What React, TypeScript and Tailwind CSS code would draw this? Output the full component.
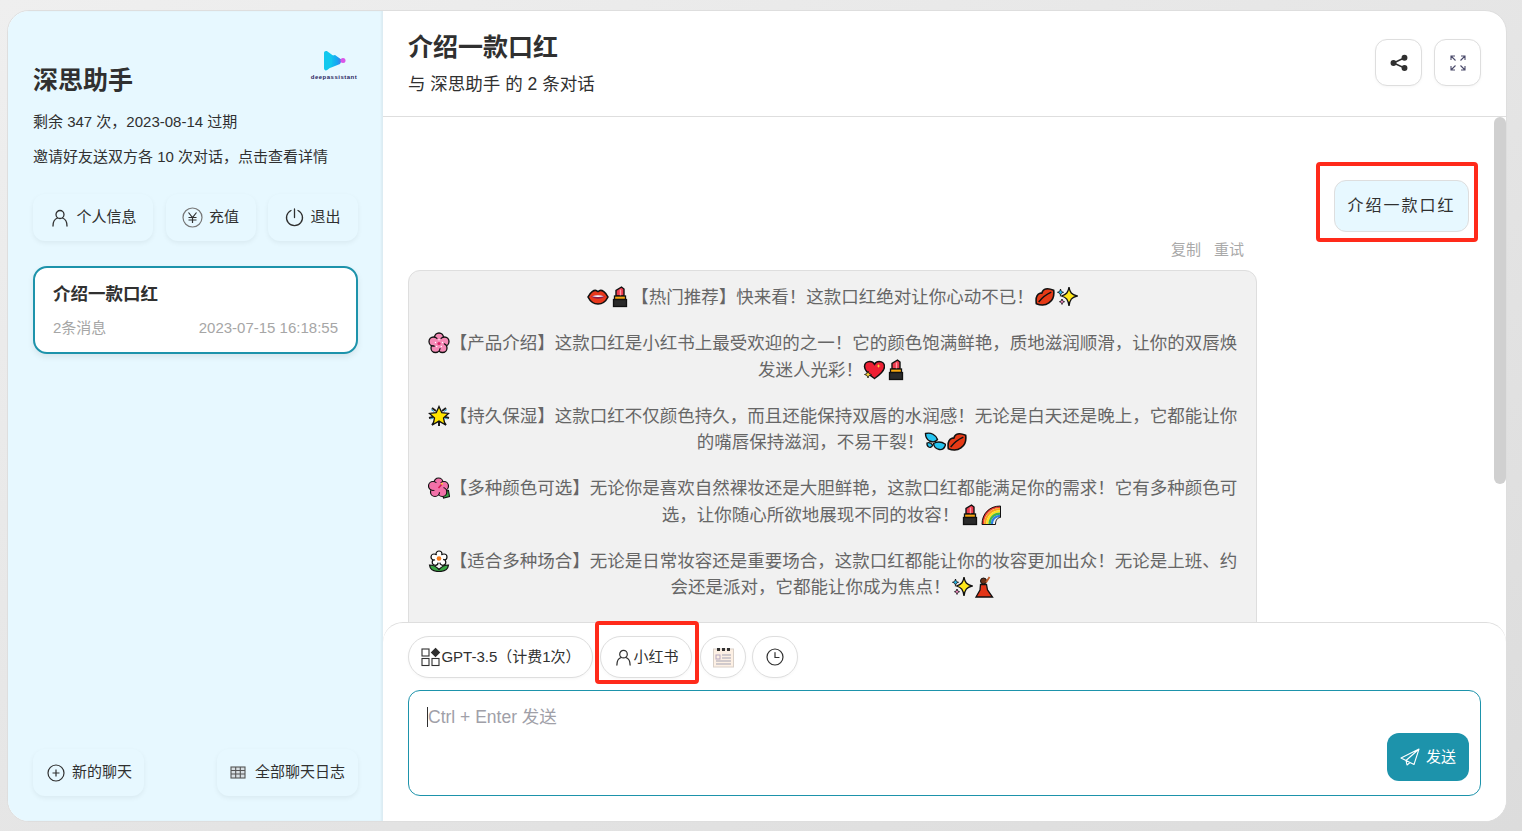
import React from "react";

const O = "#111";

function E({ children, w = 22 }: { children: React.ReactNode; w?: number }) {
  return (
    <svg viewBox="0 0 22 22" width={w} height={22} className="inline-block align-[-5px]">
      {children}
    </svg>
  );
}

const Lips = () => (
  <E>
    <path d="M1 11C3.500 6 7 4 9 4.500c1 .3 1.500 1 2 1s1-.7 2-1C15 4 18.500 6 21 11c-2.500 5-6 7-10 7S3.500 16 1 11Z" fill="#e8381c" stroke={O} strokeWidth="1.600" />
    <path d="M4 10.500Q11 8 18 10.500 11 15 4 10.500Z" fill="#8e1a4a" />
    <path d="M5 10.300Q11 8.300 17 10.300 11 11.800 5 10.300Z" fill="#fff" />
  </E>
);
const Lipstick = () => (
  <E>
    <path d="M7 10V4.500L12.500 1 15 3V10Z" fill="#ec3b4e" stroke={O} strokeWidth="1.400" />
    <path d="M11.500 3.500V10" stroke="#ff9aa5" strokeWidth="1.400" />
    <rect x="5.500" y="10" width="11" height="3.500" fill="#f7a812" stroke={O} strokeWidth="1.300" />
    <rect x="4.500" y="13.500" width="13" height="7" fill="#2a2a2a" stroke={O} strokeWidth="1.300" />
  </E>
);
const Kiss = () => (
  <E>
    <g transform="rotate(-38 11 11)">
      <path d="M0 11C3.500 5 7 4 9.500 5c.8.400 1 1 1.500 1s.7-.6 1.500-1C15 4 18.500 5 22 11c-3.500 6-7 7-10.500 7h-1C7 18 3.500 17 0 11Z" fill="#e63a16" stroke={O} strokeWidth="1.600" />
      <path d="M3 11Q11 9 19 11" fill="none" stroke={O} strokeWidth="1.500" />
    </g>
  </E>
);
const Sparkles = () => (
  <E>
    <path d="M13 1c.9 5.500 2.500 7.500 8 9-5.500 1.500-7.100 3.500-8 10-.9-6.500-2.500-8.500-7.500-10 5-1.500 6.600-3.500 7.500-9Z" fill="#ffe81a" stroke={O} strokeWidth="1.300" />
    <path d="M4.500 3c.4 2.100 1.100 2.800 3 3.300-1.900.5-2.600 1.200-3 3.300-.4-2.100-1.100-2.800-3-3.300 1.900-.5 2.600-1.200 3-3.300Z" fill="#27b7e8" stroke={O} strokeWidth=".9" />
    <path d="M6 13c.4 1.700.9 2.200 2.500 2.700-1.600.5-2.100 1-2.500 2.700-.4-1.700-.9-2.200-2.500-2.700 1.600-.5 2.100-1 2.500-2.700Z" fill="#ef86c0" stroke={O} strokeWidth=".9" />
  </E>
);
const Blossom = () => (
  <E>
    <g fill="#f58ab6" stroke={O} strokeWidth="1.300">
      <circle cx="11" cy="5.500" r="4.500" />
      <circle cx="16.500" cy="9.500" r="4.500" />
      <circle cx="14.500" cy="16" r="4.500" />
      <circle cx="7.500" cy="16" r="4.500" />
      <circle cx="5.500" cy="9.500" r="4.500" />
    </g>
    <circle cx="11" cy="11.500" r="5" fill="#f58ab6" />
    <circle cx="11" cy="11.500" r="1.600" fill="#e2246a" />
    <g fill="#fff">
      <circle cx="11" cy="7.800" r=".7" />
      <circle cx="14.500" cy="10.500" r=".7" />
      <circle cx="7.500" cy="10.500" r=".7" />
      <circle cx="13.300" cy="14.500" r=".7" />
      <circle cx="8.700" cy="14.500" r=".7" />
    </g>
  </E>
);
const SparkHeart = () => (
  <E>
    <path d="M11.500 19.500C5 15 1.500 11.500 1.500 7.500 1.500 4.500 4 2.500 6.800 2.500c2 0 3.700 1 4.700 2.800 1-1.800 2.700-2.800 4.700-2.800 2.800 0 5.300 2 5.300 5 0 4-3.500 7.500-10 12Z" fill="#ee1f33" stroke={O} strokeWidth="1.500" />
    <path d="M15.500 5l.6 1.500 1.500.5-1.500.6-.6 1.400-.6-1.400-1.400-.6 1.400-.5Z" fill="#ffd83a" />
    <path d="M5 12l1 2.500 2.500 1-2.500 1-1 2.500-1-2.500-2.500-1 2.500-1Z" fill="#ffd83a" stroke={O} strokeWidth=".8" />
  </E>
);
const GlowStar = () => (
  <E>
    <path d="M4 3l4 3M18 3l-4 3M1 13l4-1M21 13l-4-1M4 20l3-4M18 20l-3-4M11 21v-4" stroke="#1d1d1d" strokeWidth="2" />
    <path d="M3 4.500l3 2M19 4.500l-3 2M2.500 14l3-1M19.500 14l-3-1" stroke="#25a9de" strokeWidth="1" />
    <path d="M11 1.500l2.800 6.200 6.700.7-5 4.500 1.400 6.600-5.900-3.400-5.900 3.400 1.400-6.600-5-4.500 6.700-.7Z" fill="#ffe500" stroke={O} strokeWidth="1.300" />
  </E>
);
const Drops = () => (
  <E>
    <path d="M1.500 2.500C7 1 12 4 13.500 8.500c-1.800 2.500-5 2.800-8 1.500C3 8.500 1.500 5.500 1.500 2.500Z" fill="#25c4f0" stroke={O} strokeWidth="1.400" />
    <path d="M9.500 12.500c3.500-2 8-2 12 .8-.4 4-3.400 5.700-6.200 5.200-2.700-.5-5.300-2.700-5.800-6Z" fill="#25c4f0" stroke={O} strokeWidth="1.400" />
    <path d="M3 12c2.200-.8 4.200 0 5.600 2.200-.9 2-2.500 2.500-3.900 1.800C3.400 15.300 2.800 13.700 3 12Z" fill="#25c4f0" stroke={O} strokeWidth="1.300" />
  </E>
);
const Hibiscus = () => (
  <E>
    <path d="M14 15l6.500-1.500 1 6-6 1.500Z" fill="#3aa544" stroke={O} strokeWidth="1.100" />
    <g fill="#f271a8" stroke={O} strokeWidth="1.200">
      <circle cx="10.500" cy="5.500" r="4.500" />
      <circle cx="16" cy="9" r="4.500" />
      <circle cx="14.300" cy="15" r="4.500" />
      <circle cx="7" cy="15" r="4.500" />
      <circle cx="5" cy="9" r="4.500" />
    </g>
    <circle cx="10.500" cy="10.500" r="5" fill="#f271a8" />
    <path d="M10.500 11 14 7" stroke="#d3164f" strokeWidth="1.500" />
    <circle cx="14" cy="6.800" r="1" fill="#ffd83a" />
  </E>
);
const Rainbow = () => (
  <E>
    <g fill="none" strokeWidth="2.200">
      <path d="M2 20C2 10 9 3 19 3" stroke="#ef3a2d" />
      <path d="M4.200 20c0-8.500 6.300-14.800 14.800-14.800" stroke="#f9a11b" />
      <path d="M6.400 20c0-7.200 5.400-12.600 12.600-12.600" stroke="#fbe21f" />
      <path d="M8.600 20c0-6 4.400-10.400 10.400-10.400" stroke="#41b649" />
      <path d="M10.800 20c0-4.700 3.500-8.200 8.200-8.200" stroke="#2b7fe0" />
    </g>
    <path d="M1 20.500C1 9.500 8.500 2 19.500 2v11.500c-2.800 0-5 2.500-5 7Z" fill="none" stroke={O} strokeWidth="1" />
  </E>
);
const Flower = () => (
  <E>
    <path d="M1.500 15c3.500 0 6.500 1 9.500 4.500 3-3.500 6-4.500 9.500-4.500-.5 4.500-4.500 6.500-9.500 6.500S2 19.500 1.500 15Z" fill="#3aa544" stroke={O} strokeWidth="1.200" />
    <g fill="#fff" stroke={O} strokeWidth="1.200">
      <circle cx="11" cy="4" r="3" />
      <circle cx="16" cy="7" r="3" />
      <circle cx="14.800" cy="12.300" r="3" />
      <circle cx="7.200" cy="12.300" r="3" />
      <circle cx="6" cy="7" r="3" />
    </g>
    <circle cx="11" cy="8.500" r="4.300" fill="#fff" />
    <circle cx="11" cy="8.500" r="2.300" fill="#f47a1c" />
  </E>
);
const Dancer = () => (
  <E>
    <circle cx="10.500" cy="5" r="3" fill="#6b2f16" stroke={O} strokeWidth="1" />
    <path d="M13 6.500l3.500-5.500" stroke="#c0602f" strokeWidth="1.800" />
    <path d="M7.500 8.500h6l1 5.500 5 7H3l4-7Z" fill="#e23517" stroke={O} strokeWidth="1.300" />
  </E>
);

const ic = { fill: "none", stroke: "currentColor", strokeWidth: 1.3, strokeLinecap: "round" as const, strokeLinejoin: "round" as const };

const UserIcon = ({ s = 18 }: { s?: number }) => (
  <svg viewBox="0 0 18 18" width={s} height={s} {...ic}>
    <circle cx="9" cy="5.500" r="4" />
    <path d="M2 17c0-4 2-7.200 4.500-8M16 17c0-4-2-7.200-4.500-8" />
  </svg>
);

function SideBtn({ className, icon, label }: { className: string; icon: React.ReactNode; label: string }) {
  return (
    <div className={`h-[47px] rounded-[12px] bg-[#e7f8ff] shadow-[0_2px_5px_rgba(0,0,0,0.06)] flex items-center justify-center text-[15px] text-[#303030] ${className}`}>
      {icon}
      <span>{label}</span>
    </div>
  );
}

function Pill({ className, children }: { className: string; children: React.ReactNode }) {
  return (
    <div className={`h-[42px] rounded-full border border-[#dedede] bg-white shadow-[0_1px_3px_rgba(0,0,0,0.04)] flex items-center justify-center text-[15px] text-[#303030] ${className}`}>
      {children}
    </div>
  );
}

function HeadBtn({ children }: { children: React.ReactNode }) {
  return (
    <div className="w-[47px] h-[47px] rounded-[12px] border border-[#dedede] bg-white shadow-[0_1px_3px_rgba(0,0,0,0.04)] flex items-center justify-center text-[#303030]">
      {children}
    </div>
  );
}

export default function App() {
  return (
    <div className="relative w-screen h-[831px] overflow-hidden bg-gradient-to-br from-[#efefef] to-[#dcdcdc] pt-[10px] pl-[7px] pr-[15px] pb-[9px] flex text-[#303030] font-['Liberation_Sans','Noto_Sans_CJK_SC',sans-serif]">
      <div className="flex-1 flex rounded-[22px] border border-[#dedede] overflow-hidden bg-white">
        {/* Sidebar */}
        <aside className="w-[375px] shrink-0 bg-[#e7f8ff] pl-[25px] pr-[25px] flex flex-col shadow-[inset_-2px_0_2px_0_rgba(0,0,0,0.05)]">
          <div className="flex justify-between pt-[39px]">
            <div className="pt-[13px] text-[25px] leading-[34px] font-bold">深思助手</div>
            <div className="flex flex-col items-center w-[48px]">
              <svg viewBox="0 0 24 22" width="24" height="22">
                <defs>
                  <linearGradient id="lg" x1="0" x2="1" y1="0" y2="0">
                    <stop offset="0" stopColor="#12c8ee" />
                    <stop offset="0.6" stopColor="#16a6f2" />
                    <stop offset="1" stopColor="#5a6ce8" />
                  </linearGradient>
                </defs>
                <path d="M2 3c0-1.700 1.700-2.600 3.200-1.700L15 8.500c1.300 1 1.300 3 0 4L5.200 20c-1.500 1-3.200.1-3.200-1.700Z" fill="#12c8ee" />
                <path d="M9 6l4-1 7 5-2 4-5 2-5 2c2.500-4 3-8 1-12Z" fill="url(#lg)" />
                <circle cx="21" cy="10.500" r="2.500" fill="#d956e8" />
              </svg>
              <div className="text-[6px] leading-[7px] font-bold text-[#2b2660] tracking-[0.5px] whitespace-nowrap mt-[2px]">deepassistant</div>
            </div>
          </div>
          <div className="mt-[14px] text-[15px] leading-[22px]">剩余 347 次，2023-08-14 过期</div>
          <div className="mt-[13px] text-[15px] leading-[22px]">邀请好友送双方各 10 次对话，点击查看详情</div>
          <div className="mt-[26px] flex justify-between">
            <SideBtn className="w-[120px] gap-[7px] pl-[2px]" icon={<UserIcon />} label="个人信息" />
            <SideBtn
              className="w-[90px] gap-[6px]"
              icon={
                <svg viewBox="0 0 21 21" width="21" height="21" fill="none" stroke="#555" strokeWidth="1.200">
                  <circle cx="10.500" cy="10.500" r="9.500" stroke="#777" />
                  <path d="M6.500 5.500l4 5 4-5M10.500 10.500V16M6.500 10.500h8M6.500 13h8" stroke="#303030" />
                </svg>
              }
              label="充值"
            />
            <SideBtn
              className="w-[90px] gap-[6px]"
              icon={
                <svg viewBox="0 0 19 19" width="19" height="19" fill="none" stroke="#303030" strokeWidth="1.300" strokeLinecap="round">
                  <path d="M6 2.500a8 8 0 1 0 7 0M9.500 1v8.500" />
                </svg>
              }
              label="退出"
            />
          </div>
          <div className="mt-[25px] h-[88px] rounded-[14px] border-2 border-[#1d93ab] bg-white px-[18px] pt-[14px] shadow-[0_3px_6px_rgba(0,0,0,0.08)]">
            <div className="text-[17.500px] leading-[24px] font-bold">介绍一款口红</div>
            <div className="mt-[12px] flex justify-between text-[15px] leading-[20px] text-[#a6a6a6]">
              <span>2条消息</span>
              <span>2023-07-15 16:18:55</span>
            </div>
          </div>
          <div className="mt-auto mb-[25px] flex justify-between">
            <SideBtn
              className="w-[111px] gap-[7px] pl-[2px]"
              icon={
                <svg viewBox="0 0 18 18" width="18" height="18" fill="none" stroke="#303030" strokeWidth="1.200">
                  <circle cx="9" cy="9" r="8" />
                  <path d="M5.500 9h7M9 5.500v7" />
                </svg>
              }
              label="新的聊天"
            />
            <SideBtn
              className="w-[141px] gap-[9px]"
              icon={
                <svg viewBox="0 0 16 13" width="16" height="13" fill="none" stroke="#555" strokeWidth="1.100">
                  <rect x="1" y="1" width="14" height="11" fill="#d8dfe3" />
                  <path d="M1 4.500h14M1 8h14M5.700 1v11M10.300 1v11" />
                </svg>
              }
              label="全部聊天日志"
            />
          </div>
        </aside>

        {/* Main */}
        <main className="flex-1 min-w-0 flex flex-col">
          <header className="h-[106px] shrink-0 border-b border-[#dedede] px-[25px] flex items-center justify-between">
            <div>
              <div className="text-[25px] leading-[32px] font-bold mt-[1px]">介绍一款口红</div>
              <div className="mt-[8px] text-[17.500px] leading-[26px]">与 深思助手 的 2 条对话</div>
            </div>
            <div className="flex gap-[12px] -mt-[2px]">
              <HeadBtn>
                <svg viewBox="0 0 18 18" width="18" height="18" fill="#303030" stroke="#303030" strokeWidth="1.500">
                  <circle cx="14.500" cy="3.800" r="2.200" />
                  <circle cx="14.500" cy="14" r="2.200" />
                  <circle cx="3.500" cy="9" r="2.200" />
                  <path d="M14.500 3.800 3.500 9l11 5" fill="none" />
                </svg>
              </HeadBtn>
              <HeadBtn>
                <svg viewBox="0 0 18 18" width="18" height="18" fill="none" stroke="#4a4a6a" strokeWidth="1.100">
                  <path d="M2 6V2h4M2 2l4.500 4.500M16 6V2h-4M16 2l-4.500 4.500M2 12v4h4M2 16l4.500-4.500M16 12v4h-4M16 16l-4.500-4.500" />
                </svg>
              </HeadBtn>
            </div>
          </header>

          <div className="flex-1 min-h-0 flex overflow-hidden">
            <div className="flex-1 min-w-0 px-[25px] pt-[63px] flex flex-col">
              <div className="self-end h-[52px] w-[135px] shrink-0 rounded-[12px] border border-[#dedede] bg-[#e7f8ff] flex items-center justify-center text-[16px] tracking-[2px] text-[#303030]">
                介绍一款口红
              </div>
              <div className="mt-[9px] h-[18px] shrink-0 w-[849px] pr-[13px] flex justify-end gap-[13px] text-[15px] leading-[18px] text-[#a9a9a9]">
                <span>复制</span>
                <span>重试</span>
              </div>
              <div className="mt-[11px] w-[849px] shrink-0 rounded-[12px] border border-[#dedede] bg-[#f1f1f1] px-[16px] pt-[13px] pb-[60px] text-center text-[17.500px] leading-[26.250px] text-[#666]">
                <p className="mb-[20px]">
                  <Lips />
                  <Lipstick />【热门推荐】快来看！这款口红绝对让你心动不已！
                  <Kiss />
                  <Sparkles />
                </p>
                <p className="mb-[20px]">
                  <Blossom />【产品介绍】这款口红是小红书上最受欢迎的之一！它的颜色饱满鲜艳，质地滋润顺滑，让你的双唇焕发迷人光彩！
                  <SparkHeart />
                  <Lipstick />
                </p>
                <p className="mb-[20px]">
                  <GlowStar />【持久保湿】这款口红不仅颜色持久，而且还能保持双唇的水润感！无论是白天还是晚上，它都能让你的嘴唇保持滋润，不易干裂！
                  <Drops />
                  <Kiss />
                </p>
                <p className="mb-[20px]">
                  <Hibiscus />【多种颜色可选】无论你是喜欢自然裸妆还是大胆鲜艳，这款口红都能满足你的需求！它有多种颜色可选，让你随心所欲地展现不同的妆容！
                  <Lipstick />
                  <Rainbow />
                </p>
                <p>
                  <Flower />【适合多种场合】无论是日常妆容还是重要场合，这款口红都能让你的妆容更加出众！无论是上班、约会还是派对，它都能让你成为焦点！
                  <Sparkles />
                  <Dancer />
                </p>
              </div>
            </div>
            <div className="w-[12px] shrink-0">
              <div className="h-[367px] rounded-full bg-[#d0d0d0]" />
            </div>
          </div>

          <div className="h-[199px] shrink-0 rounded-t-[20px] border-t border-[#dedede] bg-white px-[25px] pt-[13px]">
            <div className="flex gap-[7px]">
              <Pill className="w-[185px] pl-[1px]">
                <svg viewBox="0 0 20 20" width="20" height="20" fill="none" stroke="#303030" strokeWidth="1.100">
                  <rect x="1" y="2" width="7" height="7" />
                  <rect x="1" y="11.500" width="7" height="7" />
                  <rect x="11" y="11.500" width="7" height="7" />
                  <path d="M14.500 1.500 18.500 5.500 14.500 9.500 10.500 5.500Z" fill="#303030" />
                </svg>
                <span>GPT-3.5（计费1次）</span>
              </Pill>
              <Pill className="w-[92px] gap-[1px] pl-[2px]">
                <UserIcon s={17} />
                <span>小红书</span>
              </Pill>
              <Pill className="w-[46px] ml-px">
                <svg viewBox="0 0 21 21" width="21" height="21">
                  <rect x=".5" y="2" width="20" height="18" fill="#fdf0e4" stroke="#d9d0c8" />
                  <rect x="4" y="1" width="3" height="3" fill="#333" />
                  <rect x="9" y="1" width="3" height="3" fill="#333" />
                  <rect x="14" y="1" width="3" height="3" fill="#333" />
                  <rect x="3" y="8" width="4" height="4" fill="none" stroke="#b7a7c0" />
                  <path d="M9 8h9M9 11h9M3 14h15M3 17h15" stroke="#a3a3b3" />
                </svg>
              </Pill>
              <Pill className="w-[46px] -ml-px">
                <svg viewBox="0 0 18 18" width="18" height="18" fill="none" stroke="#303030" strokeWidth="1.200" strokeLinecap="round">
                  <circle cx="9" cy="9" r="8" />
                  <path d="M9 4.500V9.500H13" />
                </svg>
              </Pill>
            </div>
            <div className="mt-[12px] h-[106px] rounded-[12px] border border-[#1d93ab] flex justify-between pl-[18px] pr-[11px] pb-[14px]">
              <div className="mt-[14px] h-[24px] text-[17.500px] leading-[24px] text-[#a0a0a8]">
                <span className="border-l border-[#303030]">Ctrl + Enter 发送</span>
              </div>
              <div className="self-end w-[82px] h-[48px] rounded-[12px] bg-[#1d93ab] text-white text-[15px] flex items-center justify-center gap-[6px]">
                <svg viewBox="0 0 20 18" width="20" height="18" fill="none" stroke="#fff" strokeWidth="1.100" strokeLinejoin="round">
                  <path d="M19 1 1 10l5 2.500L19 1 14 16.500 6 12.500 7 17l3-2.500" />
                </svg>
                <span>发送</span>
              </div>
            </div>
          </div>
        </main>
      </div>

      <div className="absolute left-[1316px] top-[162px] w-[162px] h-[80px] border-[4px] border-[#ff2a1a] rounded-[4px]" />
      <div className="absolute left-[595px] top-[621px] w-[104px] h-[63px] border-[4px] border-[#ff2a1a] rounded-[4px]" />
    </div>
  );
}
